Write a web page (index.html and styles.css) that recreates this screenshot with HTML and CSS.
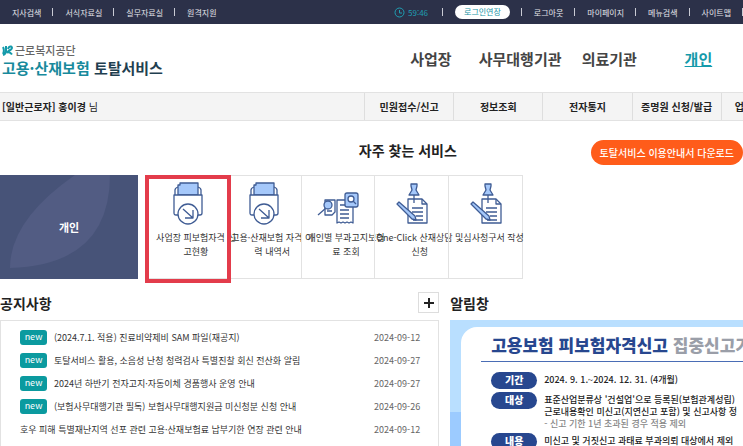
FILE: index.html
```
<!DOCTYPE html>
<html lang="ko">
<head>
    <meta charset="UTF-8">
    <meta name="viewport" content="width=device-width, initial-scale=1.0">
    <title>고용·산재보험 토탈서비스</title>
    <link rel="stylesheet" href="styles.css">
</head>
<body>
    <svg class="defs" width="0" height="0">
        <symbol id="folder" viewBox="0 0 30 44">
            <path d="M2 13V8q0-2 3-3M28 13V8q0-2-3-3" fill="none"/>
            <path d="M5 13V3h2V1h18v12z" class="fill"/>
            <path d="M6 33H3q-2 0-2-2V13h28v18q0 2-2 2h-3" fill="#fff"/>
            <circle cx="15" cy="32" r="10" fill="#fff"/>
            <path d="M10 27l10 9M20 28v8h-8" fill="none"/>
        </symbol>
        <symbol id="bill" viewBox="0 0 42 44">
            <path d="M8 18h10v12l-3 3H8z" fill="#fff"/>
            <path d="M10 29h5M1 33l8-7" fill="none"/>
            <circle cx="11" cy="23" r="4" class="fill"/>
            <path d="M20 18h16v23l-2-1-2 1-2-1-2 1-2-1-2 1-2-1-2 1z" fill="#fff"/>
            <path d="M23 23h5M23 28h9M23 32h9M23 36h9" fill="none"/>
            <rect x="28" y="11" width="13" height="14" rx="2" class="fill"/>
            <circle cx="34" cy="17" r="3" fill="#fff"/>
            <path d="M36 19l3 3" fill="none"/>
        </symbol>
        <symbol id="form" viewBox="0 0 32 44">
            <path d="M12 17h14l5 5v19H12z" fill="#fff"/>
            <path d="M26 17v5h5M16 26h11M16 30h11M20 34h7M17 38h10" fill="none"/>
            <path d="M18 13v8" fill="none"/>
            <path d="M15 2h6v2l-1 4 3 5H13l3-5-1-4z" class="fill"/>
            <path d="M1 22l2-2 16 14 1 4-4-1z" class="fill"/>
        </symbol>
    </svg>

    <div class="topbar">
        <ul>
            <li><a href="#">지사검색</a></li>
            <li><a href="#">서식자료실</a></li>
            <li><a href="#">실무자료실</a></li>
            <li><a href="#">원격지원</a></li>
        </ul>
        <ul class="right">
            <li class="timer">
                <svg width="11" height="11" viewBox="0 0 11 11"><circle cx="5.5" cy="5.5" r="4.5"/><path d="M5.5 3v3H8"/></svg>
                59:46
            </li>
            <li><button class="extend">로그인연장</button></li>
            <li><a href="#">로그아웃</a></li>
            <li><a href="#">마이페이지</a></li>
            <li><a href="#">메뉴검색</a></li>
            <li><a href="#">사이트맵</a></li>
        </ul>
    </div>

    <header>
        <a href="#" class="logo">
            <span class="org">
                <svg width="11" height="11" viewBox="0 0 11 11"><path d="M1 2c1 2 1 5 0 7M4 1v5q0 3-3 4M6 4q1-3 3-2.500 2 1 0 3-2 1-4 3 3-1 5 2"/></svg>
                근로복지공단
            </span>
            <span class="service"><em>고용·산재보험</em> 토탈서비스</span>
        </a>
        <nav class="mainNav">
            <a href="#">사업장</a>
            <a href="#">사무대행기관</a>
            <a href="#">의료기관</a>
            <a href="#" class="active">개인</a>
        </nav>
    </header>

    <nav class="subNav">
        <p><b>[일반근로자] 홍이경</b> 님</p>
        <a href="#">민원접수/신고</a>
        <a href="#">정보조회</a>
        <a href="#">전자통지</a>
        <a href="#">증명원 신청/발급</a>
        <a href="#" class="cut">업</a>
    </nav>

    <main>
        <div class="serviceHead">
            <h2>자주 찾는 서비스</h2>
            <button class="download">토탈서비스 이용안내서 다운로드</button>
        </div>

        <div class="services">
            <div class="person">
                <svg width="138" height="104" viewBox="0 0 138 104"><path d="M75 0Q10 45 10 93Q110 90 110 0z"/></svg>
                <span>개인</span>
            </div>
            <ul class="tiles">
                <li class="marked"><a href="#"><svg width="30" height="44"><use href="#folder"/></svg><span>사업장 피보험자격 신<br>고현황</span></a></li>
                <li><a href="#"><svg width="30" height="44"><use href="#folder"/></svg><span>고용·산재보험 자격 이<br>력 내역서</span></a></li>
                <li><a href="#"><svg width="42" height="44"><use href="#bill"/></svg><span>개인별 부과고지보험<br>료 조회</span></a></li>
                <li><a href="#"><svg width="32" height="44"><use href="#form"/></svg><span>One-Click 산재상담 및<br>신청</span></a></li>
                <li><a href="#"><svg width="32" height="44"><use href="#form"/></svg><span>심사청구서 작성</span></a></li>
            </ul>
        </div>

        <div class="boards">
            <section>
                <div class="boardHead">
                    <h2>공지사항</h2>
                    <button class="more" aria-label="더보기"><svg width="10" height="10" viewBox="0 0 10 10"><path d="M5 0v10M0 5h10"/></svg></button>
                </div>
                <ul class="notice">
                    <li><span class="new">new</span><a href="#">(2024.7.1. 적용) 진료비약제비 SAM 파일(재공지)</a><time>2024-09-12</time></li>
                    <li><span class="new">new</span><a href="#">토탈서비스 활용, 소음성 난청 청력검사 특별진찰 회신 전산화 알림</a><time>2024-09-27</time></li>
                    <li><span class="new">new</span><a href="#">2024년 하반기 전자고지·자동이체 경품행사 운영 안내</a><time>2024-09-27</time></li>
                    <li><span class="new">new</span><a href="#">(보험사무대행기관 필독) 보험사무대행지원금 미신청분 신청 안내</a><time>2024-09-26</time></li>
                    <li><a href="#">호우 피해 특별재난지역 선포 관련 고용·산재보험료 납부기한 연장 관련 안내</a><time>2024-09-12</time></li>
                </ul>
            </section>
            <section>
                <div class="boardHead">
                    <h2>알림창</h2>
                </div>
                <div class="banner">
                    <div class="card">
                        <h3>고용보험 피보험자격신고 <span>집중신고기간</span></h3>
                        <dl>
                            <dt>기간</dt>
                            <dd>2024. 9. 1.~2024. 12. 31. (4개월)</dd>
                            <dt>대상</dt>
                            <dd>표준산업분류상 '건설업'으로 등록된(보험관계성립)<br>근로내용확인 미신고(지연신고 포함) 및 신고사항 정<br><small>- 신고 기한 1년 초과된 경우 적용 제외</small></dd>
                            <dt>내용</dt>
                            <dd>미신고 및 거짓신고 과태료 부과의뢰 대상에서 제외</dd>
                        </dl>
                    </div>
                </div>
            </section>
        </div>
    </main>
</body>
</html>
```

FILE: styles.css
```
* {
    margin: 0;
    padding: 0;
    box-sizing: border-box;
    font-family: "Noto Sans CJK KR", sans-serif;
}
html, body {
    height: 100%;
}
body {
    overflow: hidden;
    background: #fff;
    color: #333;
    font-size: 9px;
}
ul {
    list-style: none;
}
a {
    color: inherit;
    text-decoration: none;
}
button {
    border: 0;
    cursor: pointer;
}
.defs {
    display: block;
}

/* top bar */
.topbar {
    display: flex;
    justify-content: space-between;
    height: 24px;
    padding-left: 12px;
    background: #2c3149;
    color: #e4e5ea;
    font-size: 8px;
}
.topbar ul {
    display: flex;
    align-items: center;
}
.topbar li {
    display: flex;
    align-items: center;
    white-space: nowrap;
}
.topbar li::after {
    content: "";
    width: 1px;
    height: 8px;
    margin: 0 12px 0 11px;
    background: #c9cbd4;
}
.topbar li:last-child::after {
    margin-right: 0;
}
.topbar ul:first-child li:last-child::after {
    display: none;
}
.topbar .timer {
    color: #1f9fb3;
    gap: 3px;
}
.timer svg {
    fill: none;
    stroke: #1f9fb3;
}
.extend {
    height: 14px;
    padding: 0 9px;
    border-radius: 7px;
    background: #fff;
    color: #1893a5;
    font-size: 8px;
    line-height: 14px;
}

/* header */
header {
    display: grid;
    grid-template-columns: 52% 48%;
    align-items: center;
    height: 68px;
}
.logo {
    padding: 4px 0 0 2px;
}
.logo span {
    display: block;
}
.logo .org {
    display: flex;
    align-items: center;
    gap: 2px;
    color: #666;
    font-size: 11px;
    font-weight: 500;
    line-height: 16px;
}
.org svg {
    fill: none;
    stroke: #149aaa;
    stroke-width: 2;
}
.logo .service {
    color: #1f3f50;
    font-size: 15px;
    font-weight: bold;
    line-height: 20px;
}
.service em {
    color: #188a9c;
    font-style: normal;
}
.mainNav {
    display: grid;
    grid-template-columns: repeat(4, 1fr);
    text-align: center;
    color: #444;
    font-size: 15px;
    font-weight: bold;
    white-space: nowrap;
}
.mainNav .active {
    color: #149aaa;
    text-decoration: underline;
}

/* sub menu */
.subNav {
    display: grid;
    grid-template-columns: 49% repeat(5, 12%);
    height: 29px;
    overflow: hidden;
    border-top: 1px solid #e2e2e2;
    border-bottom: 1px solid #e2e2e2;
    background: #f4f4f4;
    color: #222;
    font-size: 10px;
    line-height: 27px;
    white-space: nowrap;
}
.subNav p {
    padding-left: 2px;
}
.subNav a {
    border-left: 1px solid #dedede;
    font-weight: bold;
    text-align: center;
}
.subNav .cut {
    padding-left: 13px;
    text-align: left;
}

/* services */
.serviceHead {
    display: flex;
    justify-content: flex-end;
    align-items: flex-start;
    gap: 18%;
    padding: 19px 0 10px;
}
h2 {
    color: #222;
    font-size: 14px;
    font-weight: bold;
    line-height: 20px;
    white-space: nowrap;
}
.download {
    height: 25px;
    padding: 0 9px;
    border-radius: 13px;
    background: #ff5c1a;
    color: #fff;
    font-size: 10px;
    font-weight: 500;
    white-space: nowrap;
}
.services {
    display: grid;
    grid-template-columns: 138fr 375fr 220fr;
    gap: 10px;
    height: 104px;
    margin-right: -10px;
}
.person {
    display: grid;
    place-items: center;
    overflow: hidden;
    background: #475378;
    color: #fff;
    font-size: 11px;
    font-weight: bold;
}
.person > * {
    grid-area: 1 / 1;
}
.person path {
    fill: #525c83;
}
.tiles {
    display: grid;
    grid-template-columns: 78fr repeat(4, 74fr);
    border: 1px solid #e2e2e2;
}
.tiles li {
    position: relative;
    min-width: 0;
    border-left: 1px solid #e2e2e2;
}
.tiles li:first-child {
    border-left: 0;
}
.tiles a {
    display: flex;
    flex-direction: column;
    align-items: center;
    gap: 5px;
    padding-top: 6px;
    font-size: 9px;
    line-height: 14px;
    text-align: center;
    white-space: nowrap;
}
.tiles span {
    margin-left: 16px;
}
.tiles svg {
    flex-shrink: 0;
    stroke: #3f5c94;
    stroke-width: 1.3;
    stroke-linejoin: round;
}
.fill {
    fill: #a5c8fa;
}
.tiles .marked {
    z-index: 1;
}
.marked::after {
    content: "";
    position: absolute;
    inset: -1px -4px -5px -4px;
    border: 4px solid #e33c4b;
}

/* boards */
.boards {
    display: grid;
    grid-template-columns: 3fr 2fr;
    gap: 11px;
    padding-top: 13px;
}
.boards section {
    min-width: 0;
}
.boardHead {
    display: flex;
    justify-content: space-between;
    align-items: center;
    height: 21px;
    margin-bottom: 7px;
}
.more {
    display: flex;
    justify-content: center;
    align-items: center;
    width: 21px;
    height: 21px;
    border: 1px solid #ddd;
    background: #fff;
}
.more svg {
    stroke: #222;
    stroke-width: 2;
}
.notice {
    padding: 5px 18px 20px 19px;
    border: 1px solid #e2e2e2;
}
.notice li {
    display: flex;
    align-items: center;
    gap: 7px;
    height: 23px;
    white-space: nowrap;
}
.new {
    width: 27px;
    height: 15px;
    border-radius: 3px;
    background: #0b9a9f;
    color: #fff;
    font-size: 9px;
    line-height: 14px;
    text-align: center;
}
.notice time {
    margin-left: auto;
    color: #666;
}

/* banner */
.banner {
    padding: 7px 0 0 11px;
    overflow: hidden;
    background: linear-gradient(#b9dfff 92px, #9ccbff 92px);
}
.card {
    padding: 7px 0 12px 20px;
    border-radius: 16px 0 0 0;
    background: #fff;
    white-space: nowrap;
}
.card h3 {
    padding: 0 0 5px 10px;
    border-bottom: 1px solid #4a6db5;
    color: #27478f;
    font-size: 17px;
    font-weight: 900;
    line-height: 22px;
}
.card h3 span {
    color: #9a9ea8;
}
.card dl {
    display: grid;
    grid-template-columns: 46px 1fr;
    gap: 3px 7px;
    padding: 10px 0 0 10px;
}
.card dt {
    height: 17px;
    border-radius: 9px;
    background: #27478f;
    color: #fff;
    font-size: 10px;
    font-weight: 900;
    line-height: 16px;
    text-align: center;
}
.card dd {
    padding-top: 2px;
    color: #222;
    font-weight: 500;
    line-height: 12px;
}
.card small {
    color: #888;
    font-size: 9px;
}
```
